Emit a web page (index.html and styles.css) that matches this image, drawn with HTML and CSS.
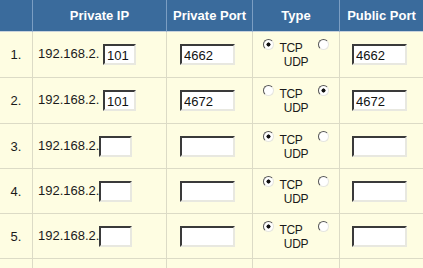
FILE: index.html
```html
<!DOCTYPE html>
<html>
<head>
<meta charset="utf-8">
<link rel="stylesheet" href="styles.css">
</head>
<body>
<table class="grid">
  <thead>
    <tr>
      <th class="c-num"></th>
      <th class="c-ip">Private IP</th>
      <th class="c-pport">Private Port</th>
      <th class="c-type">Type</th>
      <th class="c-pub">Public Port</th>
    </tr>
  </thead>
  <tbody>
    <tr class="r1">
      <td class="num">1.</td>
      <td class="ip">192.168.2. <input class="box ipbox" type="text" value="101"></td>
      <td class="mid"><input class="box portbox" type="text" value="4662"></td>
      <td class="type"><input class="rad" type="radio" name="t1" checked><span class="lbl">TCP</span><input class="rad rad2" type="radio" name="t1"><br><span class="lbl">UDP</span></td>
      <td class="mid"><input class="box portbox" type="text" value="4662"></td>
    </tr>
    <tr class="r2">
      <td class="num">2.</td>
      <td class="ip">192.168.2. <input class="box ipbox" type="text" value="101"></td>
      <td class="mid"><input class="box portbox" type="text" value="4672"></td>
      <td class="type"><input class="rad" type="radio" name="t2"><span class="lbl">TCP</span><input class="rad rad2" type="radio" name="t2" checked><br><span class="lbl">UDP</span></td>
      <td class="mid"><input class="box portbox" type="text" value="4672"></td>
    </tr>
    <tr>
      <td class="num">3.</td>
      <td class="ip">192.168.2.<input class="box ipbox" type="text"></td>
      <td class="mid"><input class="box portbox" type="text"></td>
      <td class="type"><input class="rad" type="radio" name="t3" checked><span class="lbl">TCP</span><input class="rad rad2" type="radio" name="t3"><br><span class="lbl">UDP</span></td>
      <td class="mid"><input class="box portbox" type="text"></td>
    </tr>
    <tr>
      <td class="num">4.</td>
      <td class="ip">192.168.2.<input class="box ipbox" type="text"></td>
      <td class="mid"><input class="box portbox" type="text"></td>
      <td class="type"><input class="rad" type="radio" name="t4" checked><span class="lbl">TCP</span><input class="rad rad2" type="radio" name="t4"><br><span class="lbl">UDP</span></td>
      <td class="mid"><input class="box portbox" type="text"></td>
    </tr>
    <tr>
      <td class="num">5.</td>
      <td class="ip">192.168.2.<input class="box ipbox" type="text"></td>
      <td class="mid"><input class="box portbox" type="text"></td>
      <td class="type"><input class="rad" type="radio" name="t5" checked><span class="lbl">TCP</span><input class="rad rad2" type="radio" name="t5"><br><span class="lbl">UDP</span></td>
      <td class="mid"><input class="box portbox" type="text"></td>
    </tr>
    <tr class="tail">
      <td></td><td></td><td></td><td></td><td></td>
    </tr>
  </tbody>
</table>
</body>
</html>
```

FILE: styles.css
```css
html, body {
  margin: 0;
  padding: 0;
  background: #fefde2;
  overflow: hidden;
}

.grid {
  width: 423px;
  table-layout: fixed;
  border-collapse: separate;
  border-spacing: 0;
  font-family: "Liberation Sans", Arial, sans-serif;
  font-size: 13px;
  color: #1a1a1a;
  background: #fefde2;
}

.grid th,
.grid td {
  box-sizing: border-box;
  padding: 0;
  border-right: 1px solid #dcdbc6;
  border-bottom: 1px solid #dcdbc6;
}

.grid th {
  height: 32px;
  background: #3a6b9c;
  color: #ffffff;
  font-weight: bold;
  font-size: 13px;
  text-align: center;
  border-right: 1px solid #7b9ec3;
  border-bottom: 1px solid #c9d3dc;
  padding-bottom: 1px;
}

.c-num { width: 33px; }
.c-ip { width: 134px; }
.c-pport { width: 86px; }
.c-type { width: 87px; }
.c-pub { width: 83px; }

.grid th:last-child,
.grid td:last-child {
  border-right: none;
}

.grid td {
  height: 45px;
  vertical-align: middle;
}

.grid .r1 td,
.grid .r2 td {
  height: 46px;
}

.num {
  text-align: center;
}

.ip {
  padding-left: 5px !important;
  white-space: nowrap;
}

.mid {
  text-align: center;
  padding-right: 4px !important;
}

.type {
  text-align: center;
  font-size: 12px;
  line-height: 14px;
  white-space: nowrap;
  padding-bottom: 1px !important;
}

.lbl {
  letter-spacing: -0.3px;
}

.box {
  box-sizing: border-box;
  height: 21px;
  margin: 0;
  padding: 1px 2px 0;
  font-family: "Liberation Sans", Arial, sans-serif;
  font-size: 13px;
  color: #111;
  background: #ffffff;
  border-style: solid;
  border-width: 2px;
  border-color: #3a3a3a #e8e8e0 #e8e8e0 #3a3a3a;
  outline: none;
  vertical-align: middle;
}

.ipbox { width: 33px; }
.portbox { width: 55px; }

.rad {
  -webkit-appearance: none;
  appearance: none;
  box-sizing: border-box;
  width: 11px;
  height: 11px;
  margin: 0 5px 0 0;
  border-radius: 50%;
  border: 1.5px solid;
  border-color: #555 #e6e6e0 #e6e6e0 #555;
  background: #ffffff;
  vertical-align: 2px;
}

.rad2 {
  margin: 0 0 0 15px;
}

.rad:checked {
  background: radial-gradient(circle, #111 0 1.8px, #ffffff 2.3px);
}

.tail td {
  height: 12px;
  border-bottom: none;
}
```
